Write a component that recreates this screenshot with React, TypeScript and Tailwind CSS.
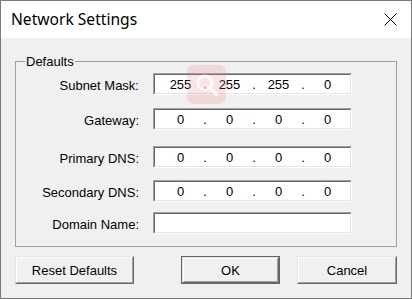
import React from "react";

const font = "font-['Liberation_Sans',Arial,sans-serif]";

function IpBox({ vals }: { vals?: string[] }) {
  return (
    <div className="w-[199px] h-[22px] border border-t-[#a0a0a0] border-l-[#a0a0a0] border-b-white border-r-white">
      <div className="h-full border border-t-[#696969] border-l-[#696969] border-b-[#e3e3e3] border-r-[#e3e3e3] bg-white flex items-center pl-[3px] text-[13px] leading-none text-black">
        {vals &&
          vals.map((v, i) => (
            <React.Fragment key={i}>
              {i > 0 && <span className="w-[4px] text-center">.</span>}
              <span className="w-[45px] text-center">{v}</span>
            </React.Fragment>
          ))}
      </div>
    </div>
  );
}

function Row({ label, vals, mt }: { label: string; vals?: string[]; mt: string }) {
  return (
    <div className={`flex items-center ${mt}`}>
      <div className="w-[123px] text-right text-[13px] leading-none text-black pt-[2px]">{label}</div>
      <div className="ml-[14px]">
        <IpBox vals={vals} />
      </div>
    </div>
  );
}

function Btn({ label, w, def }: { label: string; w: string; def?: boolean }) {
  const inner = (
    <div className="h-full border border-t-[#e3e3e3] border-l-[#e3e3e3] border-b-[#696969] border-r-[#696969]">
      <div className="h-full border border-t-white border-l-white border-b-[#a0a0a0] border-r-[#a0a0a0] bg-[#f0f0f0] flex items-center justify-center text-[13px] leading-none text-black">
        {label}
      </div>
    </div>
  );
  return (
    <div className={`${w} h-[28px] ${def ? "border border-[#646464]" : ""}`}>{inner}</div>
  );
}

export default function App() {
  const zero = ["0", "0", "0", "0"];
  return (
    <div className={`relative w-[412px] h-[299px] border border-[#7a7a7a] bg-[#f0f0f0] flex flex-col ${font}`}>
      <div className="h-[37px] bg-white flex items-center justify-between pl-[10px] pr-[14px]">
        <span className="font-['Noto_Sans',sans-serif] text-[15.6px] text-black leading-none">Network Settings</span>
        <svg width="13" height="13" viewBox="0 0 13 13">
          <path d="M0.5 0.5 L12.5 12.5 M12.5 0.5 L0.5 12.5" stroke="#000" strokeWidth="1" fill="none" />
        </svg>
      </div>
      <div className="flex-1 px-[14px] flex flex-col">
        <fieldset className="mt-[16px] border border-[#a0a0a0] pb-[12px]">
          <legend className="ml-[9px] px-[1px] h-[15px] text-[13px] leading-[15px] text-black">Defaults</legend>
          <div className="pt-[4px]">
            <Row label="Subnet Mask:" vals={["255", "255", "255", "0"]} mt="" />
            <Row label="Gateway:" vals={zero} mt="mt-[13px]" />
            <Row label="Primary DNS:" vals={zero} mt="mt-[16px]" />
            <Row label="Secondary DNS:" vals={zero} mt="mt-[12px]" />
            <Row label="Domain Name:" mt="mt-[10px]" />
          </div>
        </fieldset>
        <div className="mt-[9px] flex items-start">
          <Btn label="Reset Defaults" w="w-[119px]" />
          <div className="ml-auto flex gap-[17px]">
            <Btn label="OK" w="w-[99px]" def />
            <Btn label="Cancel" w="w-[100px]" />
          </div>
        </div>
      </div>
      <div className="absolute left-[186px] top-[64px] w-[39px] h-[39px] rounded-[7px] bg-[rgba(240,120,120,0.2)] flex items-center justify-center">
        <svg width="30" height="30" viewBox="0 0 28 28">
          <circle cx="12" cy="12" r="6.5" stroke="rgba(255,255,255,0.9)" strokeWidth="2.5" fill="none" />
          <path d="M17 17 L23 23" stroke="rgba(255,255,255,0.9)" strokeWidth="3" strokeLinecap="round" />
        </svg>
      </div>
    </div>
  );
}
